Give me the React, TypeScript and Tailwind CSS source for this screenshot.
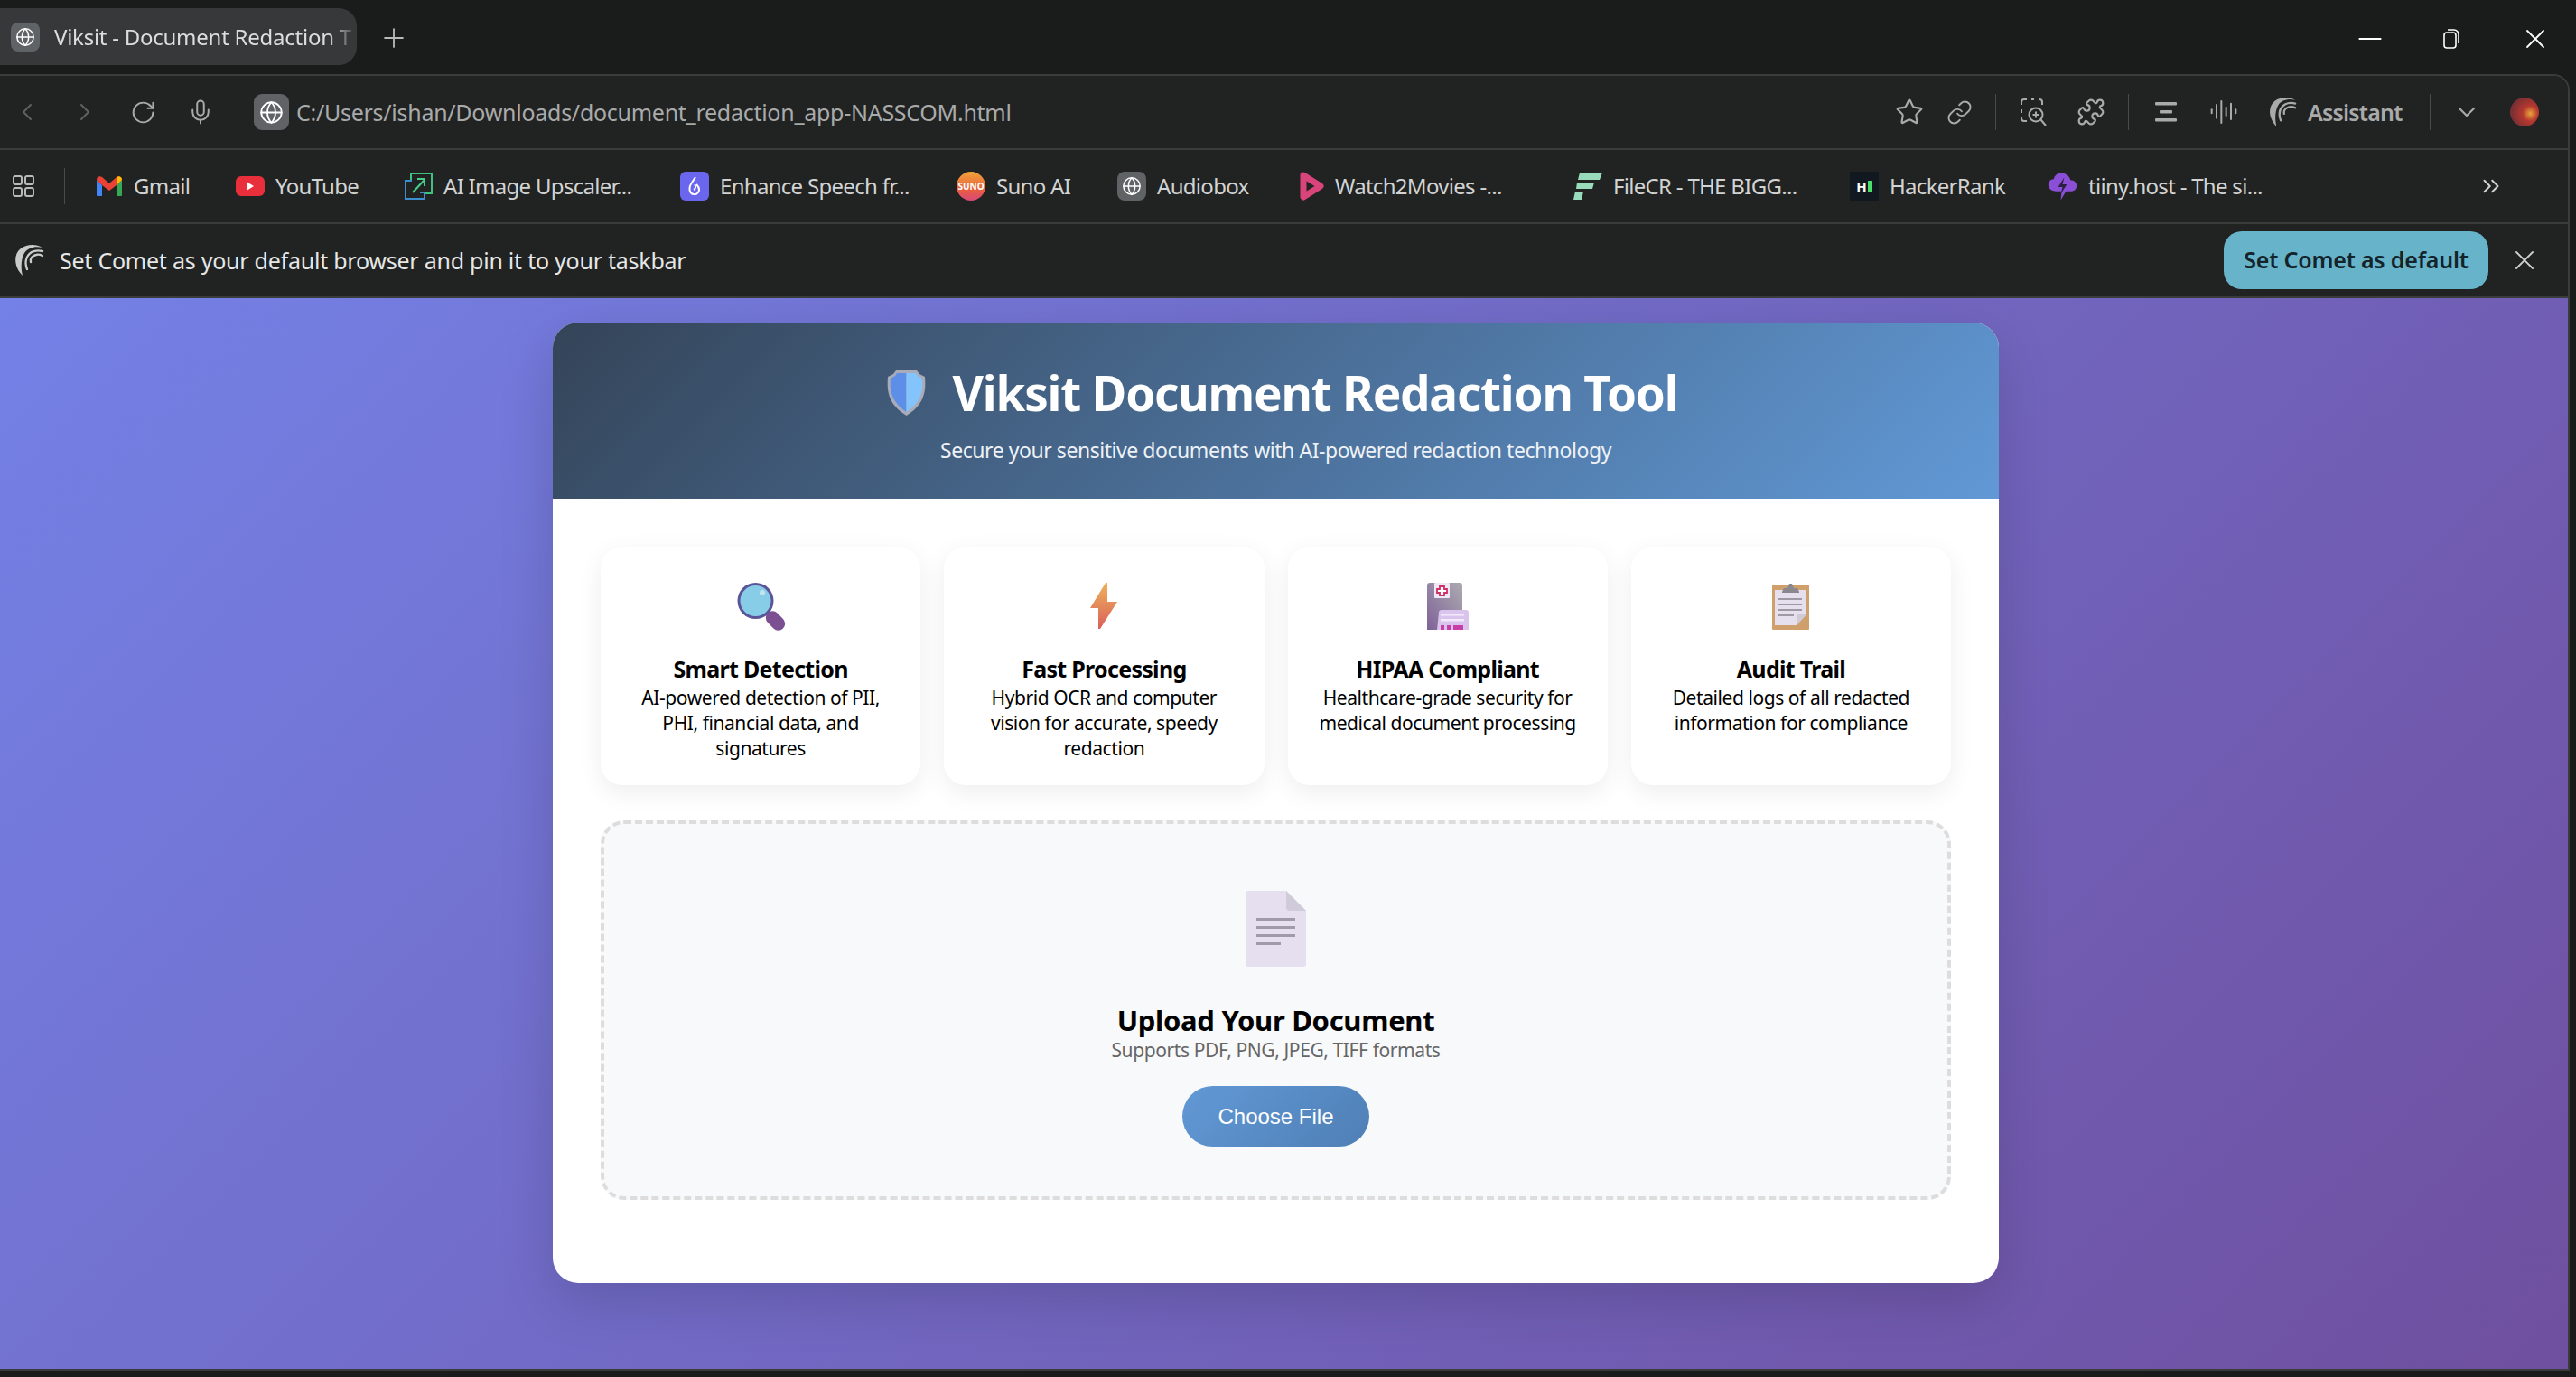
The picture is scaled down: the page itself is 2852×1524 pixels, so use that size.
import {
  AudioLines,
  ChevronDown,
  ChevronLeft,
  ChevronRight,
  ChevronsRight,
  Globe,
  Link,
  Mic,
  Minus,
  Plus,
  Puzzle,
  RotateCw,
  Star,
  X,
} from "lucide-react";
import type { ReactNode } from "react";

const uiFont = "font-['Noto_Sans','Open_Sans',sans-serif]";

function GlobeChip({ size = "small" }: { size?: "small" | "large" }) {
  return (
    <div
      className={
        size === "large"
          ? "flex h-[40px] w-[39px] shrink-0 items-center justify-center rounded-[9px] bg-[#5f6365]"
          : "flex h-[32px] w-[32px] shrink-0 items-center justify-center rounded-[8px] bg-[#5f6365]"
      }
    >
      <Globe size={size === "large" ? 27 : 22} strokeWidth={1.6} className="text-white" />
    </div>
  );
}

function CometLogo({ className }: { className: string }) {
  return (
    <svg viewBox="0 0 34 36" className={className} fill="none" stroke="currentColor" strokeLinecap="round">
      <path d="M10 35C1 26-1 12 8 5 15 0 25 0 32 4 24 2 16 4 12 10 8 17 8 27 10 35z" fill="currentColor" stroke="none" />
      <path d="M15 28C12 20 14 13 20 9 24 7 28 7 32 8" strokeWidth="2.400" />
      <path d="M19 20C18 16 21 13 25 12 28 11 30 12 32 13" strokeWidth="2.400" />
    </svg>
  );
}

function NavSlot({ children }: { children: ReactNode }) {
  return <div className="flex w-[32px] justify-center">{children}</div>;
}

function ScanIcon() {
  return (
    <svg viewBox="0 0 32 32" className="ml-[25px] h-[32px] w-[32px]" fill="none" stroke="currentColor" strokeWidth="2">
      <path d="M3 8V5a3 3 0 0 1 3-3h3M14 2h3M22 2h1a3 3 0 0 1 3 3v3M3 13v4M3 22v1a3 3 0 0 0 3 3h3" />
      <circle cx="19" cy="19" r="7.500" />
      <path d="M19 15.500v7M15.500 19h7M24.500 24.500 30 31" />
    </svg>
  );
}

function GmailIcon() {
  return (
    <svg viewBox="0 0 30 24" className="h-[24px] w-[30px]">
      <path d="M1 5v17a1 1 0 0 0 1 1h5V11z" fill="#4285f4" />
      <path d="M29 5v17a1 1 0 0 1-1 1h-5V11z" fill="#34a853" />
      <path d="M1 5c0-3 3-5 6-3l8 7 8-7c3-2 6 0 6 3l-6 6-8 6-8-6z" fill="#ea4335" />
      <path d="M23 2c3-2 6 0 6 3l-6 6z" fill="#fbbc04" />
    </svg>
  );
}

function YoutubeIcon() {
  return (
    <div className="flex h-[22px] w-[32px] items-center justify-center rounded-[6px] bg-[#e92f3b]">
      <svg viewBox="0 0 8 10" className="h-[10px] w-[8px]">
        <path d="M0 0l8 5-8 5z" fill="#fff" />
      </svg>
    </div>
  );
}

function UpscalerIcon() {
  return (
    <svg viewBox="0 0 32 32" className="h-[32px] w-[32px]" fill="none" strokeWidth="2">
      <path d="M8 9V2h23v22h-8" stroke="#3ec27e" />
      <path d="M9 10H2v20h21v-7h-5" stroke="#3b8fd0" />
      <path d="M10 23 23 9M15 8h8v8" stroke="#45d08a" />
    </svg>
  );
}

function EnhanceIcon() {
  return (
    <div className="flex h-[32px] w-[32px] items-center justify-center rounded-[6px] bg-[#6a66ee]">
      <svg viewBox="0 0 16 22" className="h-[22px] w-[16px]" fill="none" stroke="#fff" strokeWidth="2">
        <path d="M9 1 5 7c-3 4-3 7-2 10 2 4 7 4 9 1 2-3 1-6-2-9" />
        <path d="M8 9c2 2 1 5-1 6" />
      </svg>
    </div>
  );
}

function SunoIcon() {
  return (
    <div className="flex h-[32px] w-[32px] items-center justify-center rounded-full bg-[linear-gradient(180deg,#f0a53a,#e8603c_60%,#d9487a)] text-[10px] font-bold leading-none text-white">
      SUNO
    </div>
  );
}

function WatchIcon() {
  return (
    <svg viewBox="0 0 27 32" className="h-[32px] w-[27px]">
      <path d="M4 4l19 12L4 28z" fill="none" stroke="#d9447a" strokeWidth="7" strokeLinejoin="round" />
    </svg>
  );
}

function FilecrIcon() {
  return (
    <svg viewBox="0 0 32 32" className="h-[32px] w-[32px]" fill="#98dcbc">
      <path d="M7 1h25l-3 8H5z" />
      <path d="M4 12h19l-2 7H3z" />
      <path d="M2 22h9l-2 9H0z" />
    </svg>
  );
}

function HackerIcon() {
  return (
    <div className="flex h-[32px] w-[32px] items-center justify-center gap-[1px] bg-[#111820]">
      <div className="text-[15px] font-bold leading-none text-white">H</div>
      <div className="h-[12px] w-[5px] bg-[#4ade6b]" />
    </div>
  );
}

function TiinyIcon() {
  return (
    <svg viewBox="0 0 34 32" className="h-[32px] w-[33px]">
      <path d="M10 22C3 22 0 17 1 13c1-4 4-5 6-5 1-5 6-8 10-7 5 1 8 4 9 8 5 0 8 4 7 8-1 4-4 5-8 5h-4l-6 10 1-10z" fill="#8a4fd6" />
      <path d="M19 6l-7 11h5l-2 8 7-11h-5z" fill="#2a1f40" />
    </svg>
  );
}

const bookmarks: { label: string; icon: ReactNode; width: string }[] = [
  { label: "Gmail", icon: <GmailIcon />, width: "w-[155px]" },
  { label: "YouTube", icon: <YoutubeIcon />, width: "w-[186px]" },
  { label: "AI Image Upscaler...", icon: <UpscalerIcon />, width: "w-[306px]" },
  { label: "Enhance Speech fr...", icon: <EnhanceIcon />, width: "w-[306px]" },
  { label: "Suno AI", icon: <SunoIcon />, width: "w-[178px]" },
  { label: "Audiobox", icon: <GlobeChip />, width: "w-[202px]" },
  { label: "Watch2Movies -...", icon: <WatchIcon />, width: "w-[303px]" },
  { label: "FileCR - THE BIGG...", icon: <FilecrIcon />, width: "w-[306px]" },
  { label: "HackerRank", icon: <HackerIcon />, width: "w-[219px]" },
  { label: "tiiny.host - The si...", icon: <TiinyIcon />, width: "w-[476px]" },
];

function TitleBar() {
  return (
    <div className="flex h-[82px] shrink-0 items-start bg-[#1a1b1b] text-[#dcdddd]">
      <div className="mt-[9px] flex h-[63px] w-[395px] items-center gap-[16px] rounded-r-[20px] bg-[#363839] pl-[12px]">
        <GlobeChip />
        <div className="whitespace-nowrap text-[24px] leading-[32px] tracking-[-0.25px] [mask-image:linear-gradient(90deg,#000_92%,rgba(0,0,0,0.2))]">
          Viksit - Document Redaction T
        </div>
      </div>
      <Plus size={34} strokeWidth={1.3} className="ml-[24px] mt-[25px] text-[#b8b9b9]" />
      <div className="ml-auto mr-[27px] mt-[23px] flex items-center text-white">
        <Minus size={40} strokeWidth={1.1} />
        <svg viewBox="0 0 22 24" className="ml-[59px] h-[24px] w-[22px]" fill="none" stroke="currentColor" strokeWidth="1.6">
          <rect x="3" y="5" width="13" height="17" rx="3" />
          <path d="M7 2h7a5 5 0 0 1 5 5v10" />
        </svg>
        <X size={36} strokeWidth={1.2} className="ml-[64px]" />
      </div>
    </div>
  );
}

function Toolbar() {
  return (
    <div className="box-content flex h-[80px] shrink-0 items-center border-b-2 border-[#3a3b3b] bg-[#212222] pl-[14px] text-[#a9aaaa]">
      <div className="flex items-center gap-[32px]">
        <NavSlot>
          <ChevronLeft size={32} strokeWidth={1.4} className="text-[#616262]" />
        </NavSlot>
        <NavSlot>
          <ChevronRight size={32} strokeWidth={1.4} className="text-[#616262]" />
        </NavSlot>
        <NavSlot>
          <RotateCw size={29} strokeWidth={1.6} />
        </NavSlot>
        <NavSlot>
          <Mic size={30} strokeWidth={1.6} />
        </NavSlot>
      </div>
      <div className="ml-[43px]">
        <GlobeChip size="large" />
      </div>
      <div className="ml-[8px] whitespace-nowrap text-[25px] leading-[34px] tracking-[-0.27px]">
        C:/Users/ishan/Downloads/document_redaction_app-NASSCOM.html
      </div>
      <div className="ml-auto flex items-center pr-[32px]">
        <Star size={32} strokeWidth={1.6} />
        <Link size={29} strokeWidth={1.6} className="ml-[25px]" />
        <div className="ml-[25px] h-[40px] w-[1px] bg-[#4a4b4b]" />
        <ScanIcon />
        <Puzzle size={32} strokeWidth={1.6} className="ml-[32px]" />
        <div className="ml-[25px] h-[40px] w-[1px] bg-[#4a4b4b]" />
        <svg viewBox="0 0 32 32" className="ml-[25px] h-[32px] w-[32px]" fill="currentColor">
          <rect x="4" y="5" width="24" height="3.4" rx="1" />
          <rect x="9" y="14" width="14" height="3.4" rx="1" />
          <rect x="4" y="23" width="24" height="3.4" rx="1" />
        </svg>
        <AudioLines size={32} strokeWidth={1.5} className="ml-[32px]" />
        <CometLogo className="ml-[33px] h-[34px] w-[32px]" />
        <div className="ml-[12px] w-[135px] whitespace-nowrap text-[25px] font-semibold leading-[34px] tracking-[-0.8px]">Assistant</div>
        <div className="h-[40px] w-[1px] bg-[#4a4b4b]" />
        <ChevronDown size={32} strokeWidth={1.6} className="ml-[24px]" />
        <div className="ml-[32px] h-[32px] w-[32px] rounded-full bg-[radial-gradient(circle_at_70%_55%,#e8a33c_0%,#b5382f_30%,#7d2f33_70%,#5a3a3a_100%)]" />
      </div>
    </div>
  );
}

function BookmarksBar() {
  return (
    <div className="box-content flex h-[80px] shrink-0 items-center border-b-2 border-[#3a3b3b] bg-[#212222] text-[#d2d3d3]">
      <svg viewBox="0 0 24 24" className="ml-[14px] h-[24px] w-[24px]" fill="none" stroke="#b8b9b9" strokeWidth="2">
        <rect x="1" y="1" width="9" height="9" rx="2" />
        <rect x="14" y="1" width="9" height="9" rx="2" />
        <rect x="1" y="14" width="9" height="9" rx="2" />
        <rect x="14" y="14" width="9" height="9" rx="2" />
      </svg>
      <div className="ml-[33px] mr-[34px] h-[40px] w-[1px] bg-[#4a4b4b]" />
      {bookmarks.map((b) => (
        <div key={b.label} className={`flex shrink-0 items-center gap-[12px] ${b.width}`}>
          {b.icon}
          <span className="whitespace-nowrap text-[24px] leading-[32px] tracking-[-0.7px]">{b.label}</span>
        </div>
      ))}
      <ChevronsRight size={30} strokeWidth={1.6} className="text-[#d2d3d3]" />
    </div>
  );
}

function CometBanner() {
  return (
    <div className="box-content flex h-[80px] shrink-0 items-center border-b-2 border-[#3a3b3b] bg-[#212222] pl-[15px] text-[#e6e7e7]">
      <CometLogo className="h-[36px] w-[34px] text-[#c9caca]" />
      <div className="ml-[17px] whitespace-nowrap text-[25px] leading-[34px] tracking-[-0.24px]">
        Set Comet as your default browser and pin it to your taskbar
      </div>
      <button className="ml-auto flex h-[64px] w-[293px] items-center justify-center rounded-[20px] bg-[#67b4ca] text-[25px] font-semibold tracking-[-0.2px] text-[#14242a]">
        Set Comet as default
      </button>
      <X size={36} strokeWidth={1.2} className="ml-[22px] mr-[30px] text-[#d0d1d1]" />
    </div>
  );
}

function ShieldIcon() {
  return (
    <svg viewBox="0 0 43 52" className="h-[52px] w-[43px]">
      <path d="M10 1h23l3 4 6 3c1 14 1 30-20.500 43C0 38 0 22 1 8l6-3z" fill="#a9acb8" />
      <path d="M11 4h10.500v43C4 35 3 22 4 10l5-3z" fill="#5d8fe8" />
      <path d="M32 4H21.500v43C39 35 40 22 39 10l-5-3z" fill="#84c4fc" />
    </svg>
  );
}

function MagnifierIcon() {
  return (
    <svg viewBox="0 0 60 56" className="h-[56px] w-[60px]">
      <rect x="39" y="30" width="15" height="24" rx="7.500" transform="rotate(-45 46.500 42)" fill="#7c4f92" />
      <circle cx="24.500" cy="20" r="20" fill="#5a5599" />
      <circle cx="24.500" cy="20" r="17" fill="#88cde8" />
      <circle cx="32" cy="11" r="3" fill="#c4e4f2" />
    </svg>
  );
}

function BoltIcon() {
  return (
    <svg viewBox="0 0 30 52" className="h-[52px] w-[30px]">
      <defs>
        <linearGradient id="bolt" x1="0.500" y1="0" x2="0.500" y2="1">
          <stop offset="0" stopColor="#eeb25a" />
          <stop offset="1" stopColor="#d9605a" />
        </linearGradient>
      </defs>
      <path d="M17 0h2v21h11L11 51H9V28H0z" fill="url(#bolt)" />
    </svg>
  );
}

function HipaaIcon() {
  return (
    <svg viewBox="0 0 46 52" className="h-[52px] w-[46px]">
      <defs>
        <linearGradient id="hipaaBody" x1="0" y1="1" x2="1" y2="0">
          <stop offset="0" stopColor="#7f6298" />
          <stop offset="1" stopColor="#acabb0" />
        </linearGradient>
      </defs>
      <path d="M3 0h33a3 3 0 0 1 3 3v49H0V3a3 3 0 0 1 3-3z" fill="url(#hipaaBody)" />
      <rect x="8" y="0" width="17" height="17" rx="1" fill="#efe8f5" />
      <path d="M14 4h5v3h3v4h-3v3h-5v-3h-3V7h3z" fill="#fff" stroke="#cf2f63" strokeWidth="1.800" />
      <path d="M13 33a3 3 0 0 1 3-3h27a3 3 0 0 1 3 3v19H11z" fill="#d9c4ee" />
      <rect x="15" y="34" width="26" height="2.500" fill="#f3e9fb" />
      <rect x="15" y="40" width="26" height="2.500" fill="#f3e9fb" />
      <rect x="15" y="47" width="4" height="5" fill="#c93fa8" />
      <rect x="22" y="47" width="4" height="5" fill="#c93fa8" />
      <rect x="29" y="47" width="11" height="5" fill="#c93fa8" />
    </svg>
  );
}

function ClipboardIcon() {
  return (
    <svg viewBox="0 0 41 52" className="h-[52px] w-[41px]">
      <rect x="0" y="2" width="41" height="50" rx="1" fill="#cf9f6c" />
      <path d="M3 8h35v27L27 47H3z" fill="#e5dfee" />
      <path d="M27 47V35h11z" fill="#cfcbd6" />
      <path d="M11 10l2-4h4l2-5h3l2 5h4l2 4v1H11z" fill="#8b878e" />
      <rect x="7" y="17" width="26" height="2" fill="#9d9aa3" />
      <rect x="7" y="23" width="26" height="2" fill="#9d9aa3" />
      <rect x="7" y="29" width="26" height="2" fill="#9d9aa3" />
      <rect x="7" y="35" width="17" height="2" fill="#9d9aa3" />
    </svg>
  );
}

function DocIcon() {
  return (
    <svg viewBox="0 0 67 84" className="h-[84px] w-[67px]">
      <path d="M3 0h42l22 22v59a3 3 0 0 1-3 3H3a3 3 0 0 1-3-3V3a3 3 0 0 1 3-3z" fill="#e6dfef" />
      <path d="M45 0l22 22H49a4 4 0 0 1-4-4z" fill="#cfcbd8" />
      <rect x="12" y="30" width="43" height="3" fill="#a09aaa" />
      <rect x="12" y="39" width="43" height="3" fill="#a09aaa" />
      <rect x="12" y="48" width="43" height="3" fill="#a09aaa" />
      <rect x="12" y="57" width="27" height="3" fill="#a09aaa" />
    </svg>
  );
}

const features: { title: string; text: string[]; icon: ReactNode }[] = [
  {
    title: "Smart Detection",
    text: ["AI-powered detection of PII,", "PHI, financial data, and", "signatures"],
    icon: <MagnifierIcon />,
  },
  {
    title: "Fast Processing",
    text: ["Hybrid OCR and computer", "vision for accurate, speedy", "redaction"],
    icon: <BoltIcon />,
  },
  {
    title: "HIPAA Compliant",
    text: ["Healthcare-grade security for", "medical document processing"],
    icon: <HipaaIcon />,
  },
  {
    title: "Audit Trail",
    text: ["Detailed logs of all redacted", "information for compliance"],
    icon: <ClipboardIcon />,
  },
];

function RedactionCard() {
  return (
    <div className="ml-[612px] h-[1063px] w-[1601px] overflow-hidden rounded-[28px] bg-white shadow-[0_20px_60px_rgba(0,0,0,0.15)]">
      <div className="flex h-[195px] flex-col items-center bg-[linear-gradient(135deg,#344458,#6199d6)] pt-[45px] text-white">
        <div className="ml-[14px] flex items-center gap-[30px]">
          <ShieldIcon />
          <h1 className="whitespace-nowrap text-[53px] font-bold leading-[66px] tracking-[-1.2px]">Viksit Document Redaction Tool</h1>
        </div>
        <p className="mt-[14px] whitespace-nowrap text-[23px] leading-[32px] tracking-[-0.45px] text-[#eef2f6]">
          Secure your sensitive documents with AI-powered redaction technology
        </p>
      </div>
      <div className="px-[53px] pt-[53px] text-black">
        <div className="grid grid-cols-4 gap-[26px]">
          {features.map((f) => (
            <div
              key={f.title}
              className="flex h-[264px] flex-col items-center rounded-[24px] bg-white pt-[40px] text-center shadow-[0_8px_28px_rgba(0,0,0,0.07)]"
            >
              <div className="flex h-[52px] items-start justify-center">{f.icon}</div>
              <h3 className="mt-[27px] whitespace-nowrap text-[25px] font-bold leading-[32px] tracking-[-0.7px]">{f.title}</h3>
              <div className="mt-[2px] text-[21px] leading-[28px] tracking-[-0.43px]">
                {f.text.map((line) => (
                  <div key={line} className="whitespace-nowrap">
                    {line}
                  </div>
                ))}
              </div>
            </div>
          ))}
        </div>
        <div className="mt-[39px] flex h-[420px] flex-col items-center rounded-[26px] border-4 border-dashed border-[#dddddd] bg-[#f8f9fa] pt-[74px]">
          <DocIcon />
          <h2 className="mt-[39px] whitespace-nowrap text-[31px] font-bold leading-[40px] tracking-[-0.3px]">Upload Your Document</h2>
          <p className="-mt-[2px] whitespace-nowrap text-[21px] leading-[30px] tracking-[-0.4px] text-[#666666]">Supports PDF, PNG, JPEG, TIFF formats</p>
          <button className="mt-[25px] flex h-[67px] w-[207px] items-center justify-center rounded-full bg-[linear-gradient(135deg,#6199d6,#4f7fb5)] font-['Liberation_Sans',sans-serif] text-[24px] text-white">
            Choose File
          </button>
        </div>
      </div>
    </div>
  );
}

export default function App() {
  return (
    <div className={`flex h-[1524px] w-[2852px] flex-col overflow-hidden bg-[#1a1b1b] pb-[7px] ${uiFont}`}>
      <TitleBar />
      <div className="mr-[7px] flex min-h-0 flex-1 flex-col overflow-hidden rounded-tr-[18px] border-y-2 border-r-2 border-[#3a3b3b]">
        <Toolbar />
        <BookmarksBar />
        <CometBanner />
        <div className="min-h-0 flex-1 bg-[linear-gradient(135deg,#7481e6,#6f4f9f)] pt-[27px]">
          <RedactionCard />
        </div>
      </div>
    </div>
  );
}
